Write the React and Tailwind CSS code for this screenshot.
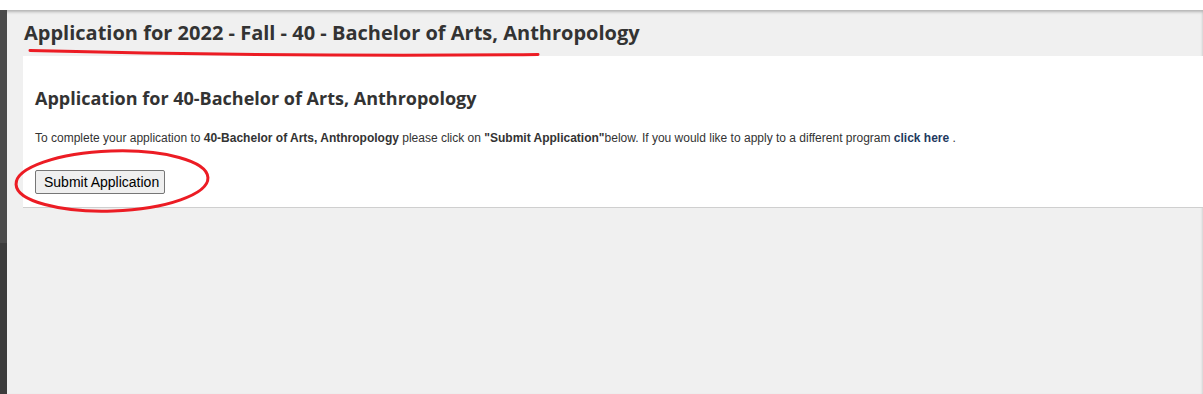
export default function App() {
    return (
        <div className="w-[1203px] h-[394px] bg-white overflow-hidden relative" style={{ fontFamily: '"Open Sans", sans-serif' }}>
            <div className="h-[10px] bg-white" />
            <div className="flex h-[384px] bg-[#f0f0f0] shadow-[inset_0_2px_3px_rgba(0,0,0,0.25)]">
                {/* Left rail */}
                <div className="w-[7px] flex flex-col shrink-0">
                    <div className="h-[233px] bg-[#4b4b4b]" />
                    <div className="flex-1 bg-[#3c3c3c]" />
                </div>

                <div className="flex-1 pl-[16px]">
                    <h1 className="text-[20px] leading-[27px] font-bold text-[#333] mt-[9px] ml-[1px]">
                        Application for 2022 - Fall - 40 - Bachelor of Arts, Anthropology
                    </h1>

                    <div className="mt-[10px] bg-white border-b border-[#cfcfcf] h-[152px] px-[12px] pt-[30px]">
                        <h2 className="text-[18px] leading-[24px] font-bold text-[#333]">
                            Application for 40-Bachelor of Arts, Anthropology
                        </h2>
                        <p className="mt-[20px] text-[12px] leading-[16px] text-[#333]" style={{ fontFamily: '"Liberation Sans", Arial, sans-serif' }}>
                            To complete your application to <b>40-Bachelor of Arts, Anthropology</b> please click on <b>"Submit Application"</b>below. If you would like to apply to a different program <a className="font-bold text-[#1f3a5f]">click here</a> .
                        </p>
                        <button
                            className="mt-[24px] h-[24px] w-[130px] pl-[8px] text-left border border-[#767676] rounded-[2px] bg-[#efefef] text-[14px] leading-[22px] text-black"
                            style={{ fontFamily: '"Liberation Sans", Arial, sans-serif' }}
                        >
                            Submit Application
                        </button>
                    </div>
                </div>
            </div>

            {/* Annotation marks */}
            <svg className="absolute left-0 top-0 pointer-events-none" width="1203" height="394">
                <path d="M30 50.5 Q 300 57 538 54.5" fill="none" stroke="#ec1c24" strokeWidth="3" strokeLinecap="round" />
                <ellipse cx="112" cy="181" rx="96" ry="30" fill="none" stroke="#ec1c24" strokeWidth="3" transform="rotate(-2 112 181)" />
            </svg>
        </div>
    );
}
